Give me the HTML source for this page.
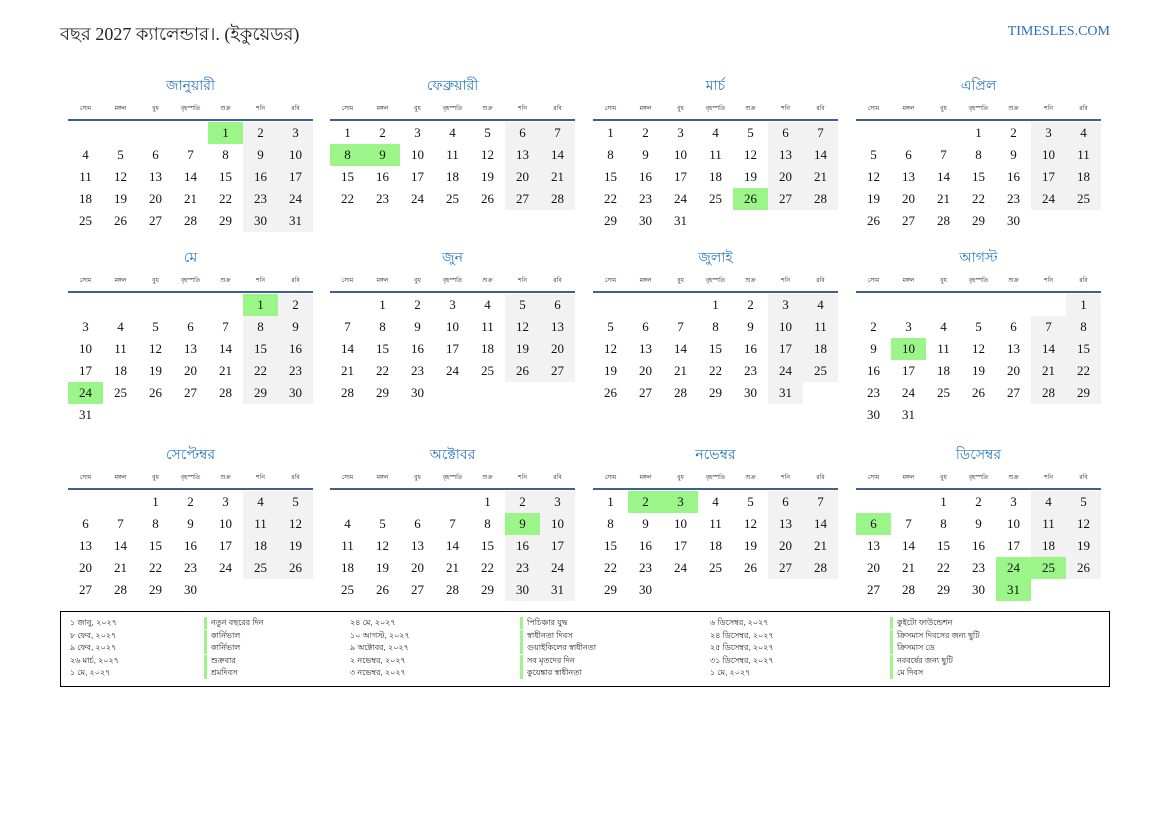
<!DOCTYPE html>
<html><head><meta charset="utf-8">
<style>
body{margin:0;width:1169px;height:827px;background:#fff;position:relative;font-family:"Liberation Serif",serif;overflow:hidden}
.t{position:absolute;left:60px;top:20px;font-size:18px;color:#222}
.site{position:absolute;right:59px;top:24px;font-size:14px;color:#2a6ebb}
.m{position:absolute;width:245px}
.mt{text-align:center;font-size:14px;color:#2a78c0;height:20px;line-height:20px;font-family:"Liberation Sans",sans-serif}
.wd{display:flex;height:15px;margin-top:9px;border-bottom:2px solid #3f5f8f;font-size:6px;font-family:"Liberation Sans",sans-serif;color:#222}
.wd div{width:35px;text-align:center;line-height:10px}
.g{display:grid;grid-template-columns:repeat(7,35px);grid-auto-rows:22px;margin-top:1px}
.g div{text-align:center;line-height:22px;font-size:13px;color:#111}
.we{background:#f2f2f2}
.h{background:#9cf588!important}
.leg{position:absolute;left:60px;top:611px;width:1048px;height:74px;border:1.5px solid #000;font-family:"Liberation Sans",sans-serif;font-size:8px;color:#222}
.r{position:absolute;height:12px;line-height:12px;white-space:nowrap}
.b{border-left:3px solid #9cf588;padding-left:4px}
</style></head><body>
<div class="t">বছর 2027 ক্যালেন্ডার।. (ইকুয়েডর)</div>
<div class="site">TIMESLES.COM</div>
<div id="c"></div>
<div class="leg" id="leg"></div>
<script>
var names=["জানুয়ারী","ফেব্রুয়ারী","মার্চ","এপ্রিল","মে","জুন","জুলাই","আগস্ট","সেপ্টেম্বর","অক্টোবর","নভেম্বর","ডিসেম্বর"];
var off=[4,0,0,3,5,1,3,6,2,4,0,2],len=[31,28,31,30,31,30,31,31,30,31,30,31];
var hol=[[1],[8,9],[26],[],[1,24],[],[],[10],[],[9],[2,3],[6,24,25,31]];
var wd=["সোম","মঙ্গল","বুধ","বৃহস্পতি","শুক্র","শনি","রবি"];
var xs=[68,330,593,856],ys=[75,247,444],h="";
for(var i=0;i<12;i++){
 h+='<div class="m" style="left:'+xs[i%4]+'px;top:'+ys[Math.floor(i/4)]+'px"><div class="mt">'+names[i]+'</div><div class="wd">';
 wd.forEach(function(w){h+='<div>'+w+'</div>'});
 h+='</div><div class="g">';
 for(var k=0;k<off[i];k++)h+='<div></div>';
 for(var d=1;d<=len[i];d++){var c=(off[i]+d-1)%7;var cl=(c>=5?'we':'')+(hol[i].indexOf(d)>=0?' h':'');h+='<div class="'+cl+'">'+d+'</div>'}
 h+='</div></div>';
}
document.getElementById('c').innerHTML=h;
var L=[["১ জানু, ২০২৭","নতুন বছরের দিন","২৪ মে, ২০২৭","পিচিঞ্চার যুদ্ধ","৬ ডিসেম্বর, ২০২৭","কুইটো ফাউন্ডেশন"],
["৮ ফেব, ২০২৭","কার্নিভাল","১০ আগস্ট, ২০২৭","স্বাধীনতা দিবস","২৪ ডিসেম্বর, ২০২৭","ক্রিসমাস দিবসের জন্য ছুটি"],
["৯ ফেব, ২০২৭","কার্নিভাল","৯ অক্টোবর, ২০২৭","গুয়াইকিলের স্বাধীনতা","২৫ ডিসেম্বর, ২০২৭","ক্রিসমাস ডে"],
["২৬ মার্চ, ২০২৭","শুক্রবার","২ নভেম্বর, ২০২৭","সব মৃতদের দিন","৩১ ডিসেম্বর, ২০২৭","নববর্ষের জন্য ছুটি"],
["১ মে, ২০২৭","শ্রমদিবস","৩ নভেম্বর, ২০২৭","কুয়েঙ্কার স্বাধীনতা","১ মে, ২০২৭","মে দিবস"]];
var lx=[9,143,289,459,649,829],g="";
L.forEach(function(r,j){r.forEach(function(t,k){g+='<div class="r'+(k%2?' b':'')+'" style="left:'+lx[k]+'px;top:'+(5+j*12.5)+'px">'+t+'</div>'})});
document.getElementById('leg').innerHTML=g;
</script>
</body></html>
